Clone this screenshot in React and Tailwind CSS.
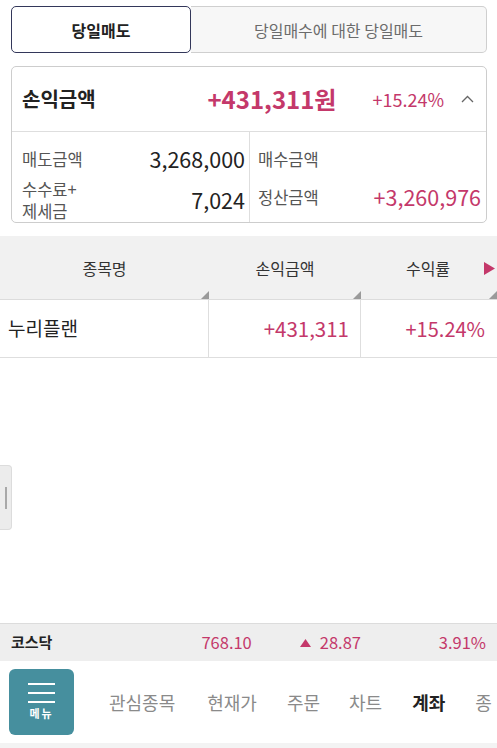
import React from "react";

const F = { fontFamily: '"Noto Sans CJK KR", "Noto Sans", sans-serif' };

function Corner() {
  return (
    <svg className="absolute right-0 bottom-0" width="8" height="8" viewBox="0 0 8 8">
      <polygon points="8,0 8,8 0,8" fill="#9a9a9a" />
    </svg>
  );
}

export default function App() {
  return (
    <div style={F} className="relative w-[497px] h-[748px] bg-white flex flex-col overflow-hidden">
      {/* tabs */}
      <div className="flex px-[11px] pt-[6px] pr-[10px] shrink-0">
        <div className="w-[180px] h-[47px] rounded-[5px] border-[1.5px] border-[#33375a] flex items-center justify-center text-[16px] font-bold text-[#222]">
          당일매도
        </div>
        <div className="flex-1 h-[47px] rounded-r-[5px] border border-l-0 border-[#cfcfcf] bg-[#f7f7f7] flex items-center justify-center text-[16px] text-[#6b6b6b]">
          당일매수에 대한 당일매도
        </div>
      </div>

      {/* summary card */}
      <div className="mx-[11px] mr-[10px] mt-[13px] h-[157px] shrink-0 rounded-[5px] border border-[#cdcdcd] flex flex-col">
        <div className="h-[65px] shrink-0 flex items-center border-b border-[#dedede] pl-[10px] pr-[12px]">
          <span className="text-[20px] font-bold text-[#222]">손익금액</span>
          <span className="ml-auto text-[24px] font-bold text-[#c4386a]">+431,311원</span>
          <span className="ml-[36px] text-[18px] text-[#c4386a]">+15.24%</span>
          <svg className="ml-[17px]" width="13" height="8" viewBox="0 0 13 8">
            <polyline points="1,7 6.5,1.5 12,7" fill="none" stroke="#666" strokeWidth="1.3" />
          </svg>
        </div>
        <div className="flex-1 flex min-h-0">
          <div className="w-[238px] border-r border-[#dedede] pl-[10px] pr-[4px] flex flex-col">
            <div className="h-[46px] shrink-0 flex items-center pt-[8px]">
              <span className="text-[16.5px] text-[#555]">매도금액</span>
              <span className="ml-auto text-[21.5px] text-[#222]">3,268,000</span>
            </div>
            <div className="flex-1 flex items-center pb-[6px]">
              <span className="text-[16.5px] leading-[22px] text-[#555]">수수료+<br />제세금</span>
              <span className="ml-auto text-[21.5px] text-[#222]">7,024</span>
            </div>
          </div>
          <div className="flex-1 pl-[8px] pr-[5px] flex flex-col">
            <div className="h-[46px] shrink-0 flex items-center pt-[8px]">
              <span className="text-[16.5px] text-[#555]">매수금액</span>
            </div>
            <div className="flex-1 flex items-center pb-[6px]">
              <span className="text-[16.5px] text-[#555]">정산금액</span>
              <span className="ml-auto text-[21.5px] text-[#c4386a]">+3,260,976</span>
            </div>
          </div>
        </div>
      </div>

      {/* table */}
      <div className="mt-[13px] shrink-0">
        <div className="h-[64px] bg-[#f1f1f1] flex border-b border-[#dcdcdc] text-[16px] text-[#333]">
          <div className="relative w-[209px] flex items-center justify-center">종목명<Corner /></div>
          <div className="relative w-[152px] flex items-center justify-center">손익금액<Corner /></div>
          <div className="relative flex-1 flex items-center justify-center">
            <span className="mr-[2px]">수익률</span>
            <svg className="absolute right-[2px] top-[26px]" width="11" height="13" viewBox="0 0 11 13">
              <polygon points="0,0 11,6.5 0,13" fill="#c4386a" />
            </svg>
            <Corner />
          </div>
        </div>
        <div className="h-[58px] flex border-b border-[#dedede]">
          <div className="w-[209px] border-r border-[#dedede] flex items-center pl-[8px] text-[19px] text-[#222]">누리플랜</div>
          <div className="w-[152px] border-r border-[#dedede] flex items-center justify-end pr-[11px] text-[20.5px] text-[#c4386a]">+431,311</div>
          <div className="flex-1 flex items-center justify-end pr-[12px] text-[20px] text-[#c4386a]">+15.24%</div>
        </div>
      </div>

      <div className="flex-1" />

      {/* side handle */}
      <div className="absolute left-0 top-[465px] w-[12px] h-[65px] rounded-r-[4px] bg-[#ececec] border border-l-0 border-[#dcdcdc] flex items-center justify-center">
        <div className="w-[2px] h-[22px] bg-[#a8a8a8]" />
      </div>

      {/* ticker */}
      <div className="h-[38px] shrink-0 bg-[#eeeeee] border-t border-[#dcdcdc] flex items-center text-[16.5px]">
        <span className="ml-[11px] font-bold text-[#222] text-[15px]">코스닥</span>
        <span className="ml-[149px] text-[#c4386a]">768.10</span>
        <span className="ml-[48px] flex items-center text-[#c4386a]">
          <svg width="11" height="8" viewBox="0 0 11 8" className="mr-[9px]">
            <polygon points="5.5,0 11,8 0,8" fill="#c4386a" />
          </svg>
          28.87
        </span>
        <span className="ml-auto mr-[11px] text-[#c4386a]">3.91%</span>
      </div>

      {/* bottom nav */}
      <div className="h-[87px] shrink-0 bg-white flex items-center overflow-hidden border-b-[5px] border-[#f3f3f3]">
        <div className="ml-[9px] shrink-0 w-[65px] h-[66px] rounded-[6px] bg-[#468f9e] flex flex-col items-center justify-center">
          <div className="w-[27px] h-[2px] bg-white" />
          <div className="w-[27px] h-[2px] bg-white mt-[7px]" />
          <div className="w-[27px] h-[2px] bg-white mt-[7px]" />
          <span className="text-white text-[11px] font-bold mt-[2px] tracking-[2px]">메뉴</span>
        </div>
        <div className="flex items-center shrink-0 text-[18px] text-[#8a8a8a] whitespace-nowrap">
          <span className="ml-[35px]">관심종목</span>
          <span className="ml-[32px]">현재가</span>
          <span className="ml-[30px]">주문</span>
          <span className="ml-[29px]">차트</span>
          <span className="ml-[30px] font-bold text-[#222]">계좌</span>
          <span className="ml-[30px]">종</span>
        </div>
      </div>
    </div>
  );
}
